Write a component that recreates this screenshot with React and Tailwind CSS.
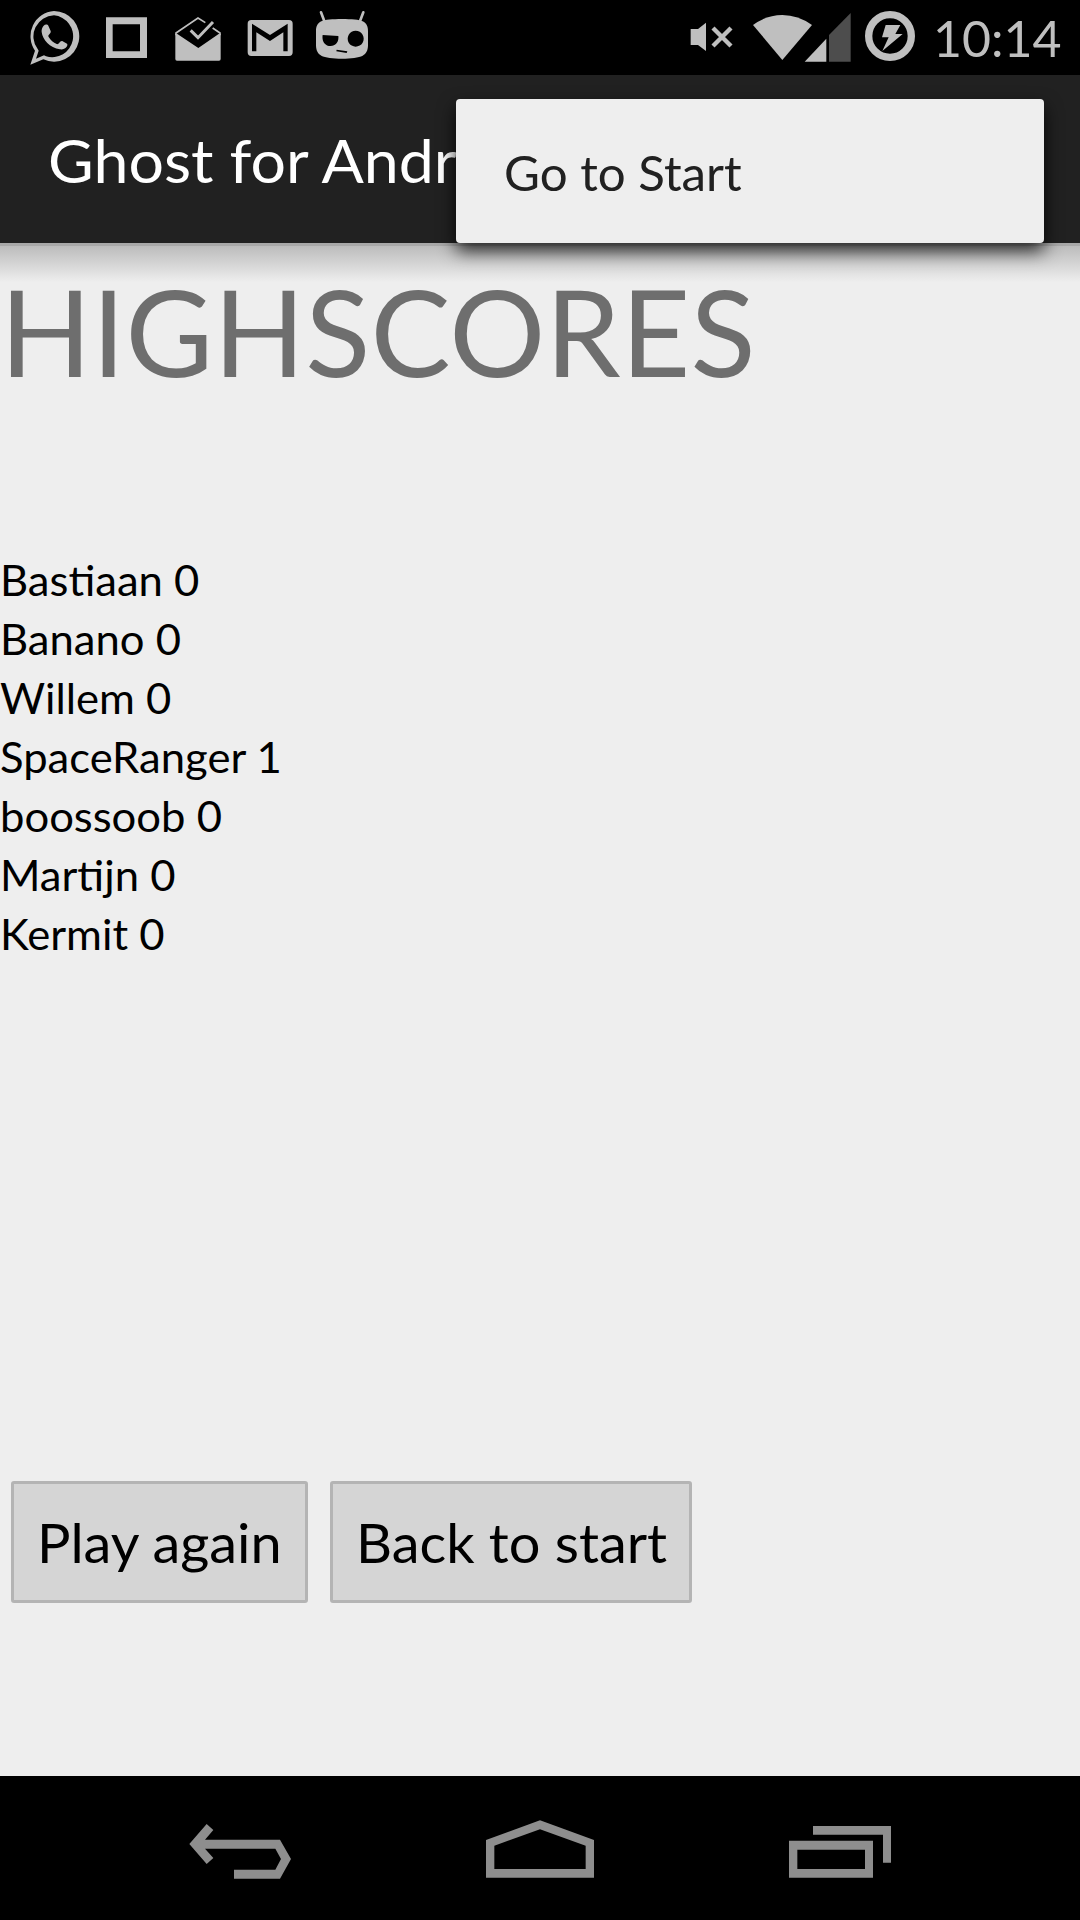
import React from "react";

const scores = [
  ["Bastiaan", 0],
  ["Banano", 0],
  ["Willem", 0],
  ["SpaceRanger", 1],
  ["boossoob", 0],
  ["Martijn", 0],
  ["Kermit", 0],
];

function StatusIcon({ x, w, className, children }) {
  return (
    <svg
      viewBox={`${x} 0 ${w * 3} 225`}
      width={w}
      height={75}
      className={`shrink-0 text-[#bfbfbf] ${className || ""}`}
      fill="currentColor"
    >
      {children}
    </svg>
  );
}

function StatusBar() {
  return (
    <div className="flex h-[75px] justify-between bg-black">
      <div className="flex pl-[25px]">
        {/* Messenger */}
        <StatusIcon x={75} w={58}>
          <path
            fillRule="evenodd"
            d="M162 33a76 76 0 1 1-32 145L91 194l14-42A76 76 0 0 1 162 33zM162 46a63 63 0 0 0-49 101l3 5-8 24 24-10 6 3A63 63 0 1 0 162 46z"
          />
          <path d="M131 77c4-4 11-5 14 0l7 16c1 4-1 7-4 10-3 3-4 5-2 8 6 10 14 17 24 21 3 1 5 0 7-2 4-5 7-8 11-6l13 7c2 2 1 6-1 9-5 7-13 9-20 8-31-5-52-28-55-52-1-8 2-15 6-19z" />
        </StatusIcon>
        {/* Square */}
        <StatusIcon x={318} w={41} className="ml-[23px]">
          <path fillRule="evenodd" d="M318 52h123v122H318zM338 73v81h82V73z" />
        </StatusIcon>
        {/* Inbox */}
        <StatusIcon x={525} w={46} className="ml-[28px]">
          <path d="M526 102l5-1 64 43 62-43 5 1v75q0 5-5 5H531q-5 0-5-5z" />
          <path
            d="M528 106V99L594 54l22 14M638 84l22 15v7"
            fill="none"
            stroke="currentColor"
            strokeWidth="5"
          />
          <path d="M572 91l22 22 45-47" fill="none" stroke="currentColor" strokeWidth="9" />
        </StatusIcon>
        {/* Mail */}
        <StatusIcon x={741} w={46} className="ml-[26px]">
          <path
            fillRule="evenodd"
            d="M754 60H867q11 0 11 11v86q0 11-11 11H754q-11 0-11-11V71q0-11 11-11zM756 71v83h13V97l41 26 40-26v57h13V71l-53 34z"
          />
        </StatusIcon>
        {/* Robot head */}
        <StatusIcon x={945} w={54} className="ml-[22px]">
          <path d="M963 37l11 29M1090 37l-11 29" fill="none" stroke="currentColor" strokeWidth="8" strokeLinecap="round" />
          <path
            fillRule="evenodd"
            d="M1026 57c28 0 52 2 62 7 12 6 16 16 16 30v42c0 14-5 26-16 31-12 6-35 9-62 9s-50-3-62-9c-11-5-16-17-16-31V94c0-14 4-24 16-30 10-5 34-7 62-7zM968 105c-3 17 6 33 24 33 16 0 25-13 23-30zM1067 92a24 24 0 1 0 .1 0zM1010 149l-1 5 31 5 2-5z"
          />
        </StatusIcon>
      </div>
      <div className="flex">
        {/* Muted speaker */}
        <StatusIcon x={60} w={43}>
          <path d="M62 87h22l24-19v85l-24-18H62z" />
          <path d="M129 84l54 54M183 84l-54 54" stroke="currentColor" strokeWidth="13" />
        </StatusIcon>
        {/* Wi-Fi and signal */}
        <StatusIcon x={246} w={100} className="ml-[19px]">
          <path d="M249 75Q290 45 337 45T426 75L337 180z" />
          <path d="M404 185L469 116v69z" />
          <path d="M477 185V105L542 39v146z" fill="#4d4d4d" />
        </StatusIcon>
        {/* Battery */}
        <StatusIcon x={582} w={52} className="ml-[12px]">
          <circle cx="660" cy="108" r="64" fill="none" stroke="currentColor" strokeWidth="22" />
          <path d="M647 75h44l-15 27h22l-61 51 19-41h-20z" />
        </StatusIcon>
        <div className="ml-[17px] w-[147px] text-[50px] leading-[77px] text-[#bfbfbf]">10:14</div>
      </div>
    </div>
  );
}

function ActionBar() {
  return (
    <div className="relative z-10 h-[168px] bg-[#212121]">
      <h1 className="w-[456px] overflow-hidden pl-[48px] pt-[2px] text-[60px] leading-[166px] whitespace-nowrap text-white">
        <span className="inline-block origin-left scale-x-[1.044]">Ghost for Andr</span>
      </h1>
      <div className="absolute left-[456px] top-[24px] flex h-[144px] w-[588px] items-center rounded-[4px] bg-[#eeeeee] pl-[48px] text-[48px] leading-[58px] text-[#212121] shadow-[0_8px_18px_rgba(0,0,0,0.8)]">
        <span className="origin-left scale-x-[1.026] pt-[3px]">Go to Start</span>
      </div>
    </div>
  );
}

function Button({ className, children }) {
  return (
    <button
      className={`h-[122px] rounded-[3px] border-[3px] border-[#b4b4b4] bg-[#d5d5d5] pl-[23px] text-left text-[54px] leading-[118px] whitespace-nowrap text-black ${className}`}
    >
      <span className="inline-block origin-left scale-x-[1.035]">{children}</span>
    </button>
  );
}

function NavIcon({ x, w, className, d }) {
  return (
    <svg viewBox={`${x} 18 ${w * 3} 432`} width={w} height={144} className={`shrink-0 ${className || ""}`}>
      <path d={d} fill="#8e8e8e" fillRule="evenodd" />
    </svg>
  );
}

export default function App() {
  return (
    <div className="flex h-[1920px] w-[1080px] flex-col overflow-hidden bg-[#eeeeee] font-['Lato',sans-serif]">
      <StatusBar />
      <ActionBar />
      <main className="flex flex-1 flex-col">
        <div className="h-[3px] bg-[#a8a8a8]" />
        <div className="h-[36px] bg-linear-to-b from-[#bcbcbc] to-[#eeeeee]" />
        <h2 className="-mt-[23px] text-[120px] leading-[144px] tracking-[0.2px] text-[#6e6e6e]">HIGHSCORES</h2>
        <ul className="mt-[148px] w-[400px] origin-left scale-x-[1.038] text-[42px] leading-[59px] text-black">
          {scores.map(([name, score]) => (
            <li key={name}>
              {name} {score}
            </li>
          ))}
        </ul>
        <div className="mt-auto mb-[173px] flex pl-[11px]">
          <Button className="w-[297px]">Play again</Button>
          <Button className="ml-[22px] w-[362px]">Back to start</Button>
        </div>
      </main>
      <nav className="flex h-[144px] bg-black pl-[189px]">
        <NavIcon
          x={87}
          w={103}
          d="M88 222L140 162L160 180L135 209H360L393 267L360 326H222V299H346L363 267L346 236H135L160 264L140 282Z"
        />
        <NavIcon
          x={975}
          w={110}
          className="ml-[193px]"
          d="M978 210L1140 151L1302 210V323H978ZM1003 227V297H1277V227L1140 178Z"
        />
        <NavIcon
          x={144}
          w={104}
          className="ml-[193px]"
          d="M147 212H399V323H147ZM172 239V297H375V239ZM219 168H453V278H429V194H219Z"
        />
      </nav>
    </div>
  );
}
